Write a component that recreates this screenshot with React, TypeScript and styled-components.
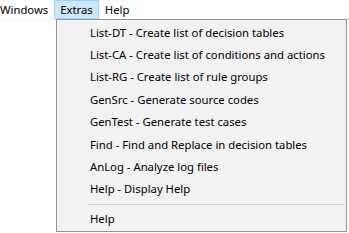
import React from "react";
import styled, { createGlobalStyle } from "styled-components";

const Global = createGlobalStyle`
  html, body { margin: 0; padding: 0; background: #ffffff; }
  body { font-family: "Noto Sans", "Open Sans", sans-serif; font-size: 11.3px; color: #000; }
`;

const Page = styled.div`
  position: relative;
  width: 349px;
  height: 233px;
  overflow: hidden;
  background: #ffffff;
`;

const MenuBar = styled.div`
  display: flex;
  height: 19px;
  border-bottom: 1px solid #f0f0f0;
  background: #ffffff;
`;

const BarItem = styled.div<{ $active?: boolean }>`
  display: flex;
  align-items: center;
  height: 19px;
  box-sizing: border-box;
  padding: 0 5px 1px 5px;
  border: 1px solid ${(p) => (p.$active ? "#99d1ff" : "transparent")};
  background: ${(p) => (p.$active ? "#cce8ff" : "transparent")};
  &:first-child { padding-left: 0; border-left: 0; }
`;

const Dropdown = styled.div`
  position: absolute;
  left: 56px;
  top: 19px;
  width: 291px;
  height: 213px;
  box-sizing: border-box;
  background: #f2f2f2;
  border: 1px solid #979797;
  padding: 1px 2px 0 2px;
  display: flex;
  flex-direction: column;
`;

const Item = styled.div`
  flex: 0 0 22.4px;
  display: flex;
  align-items: center;
  padding-left: 31px;
  white-space: nowrap;
`;

const Separator = styled.div`
  flex: 0 0 1px;
  background: #d7d7d7;
  margin: 4px 0 2.6px 28px;
`;

const items = [
  "List-DT - Create list of decision tables",
  "List-CA - Create list of conditions and actions",
  "List-RG - Create list of rule groups",
  "GenSrc - Generate source codes",
  "GenTest - Generate test cases",
  "Find - Find and Replace in decision tables",
  "AnLog - Analyze log files",
  "Help - Display Help",
];

export default function App() {
  return (
    <Page>
      <Global />
      <MenuBar>
        <BarItem>Windows</BarItem>
        <BarItem $active>Extras</BarItem>
        <BarItem>Help</BarItem>
      </MenuBar>
      <Dropdown>
        {items.map((t) => (
          <Item key={t}>{t}</Item>
        ))}
        <Separator />
        <Item>Help</Item>
      </Dropdown>
    </Page>
  );
}
